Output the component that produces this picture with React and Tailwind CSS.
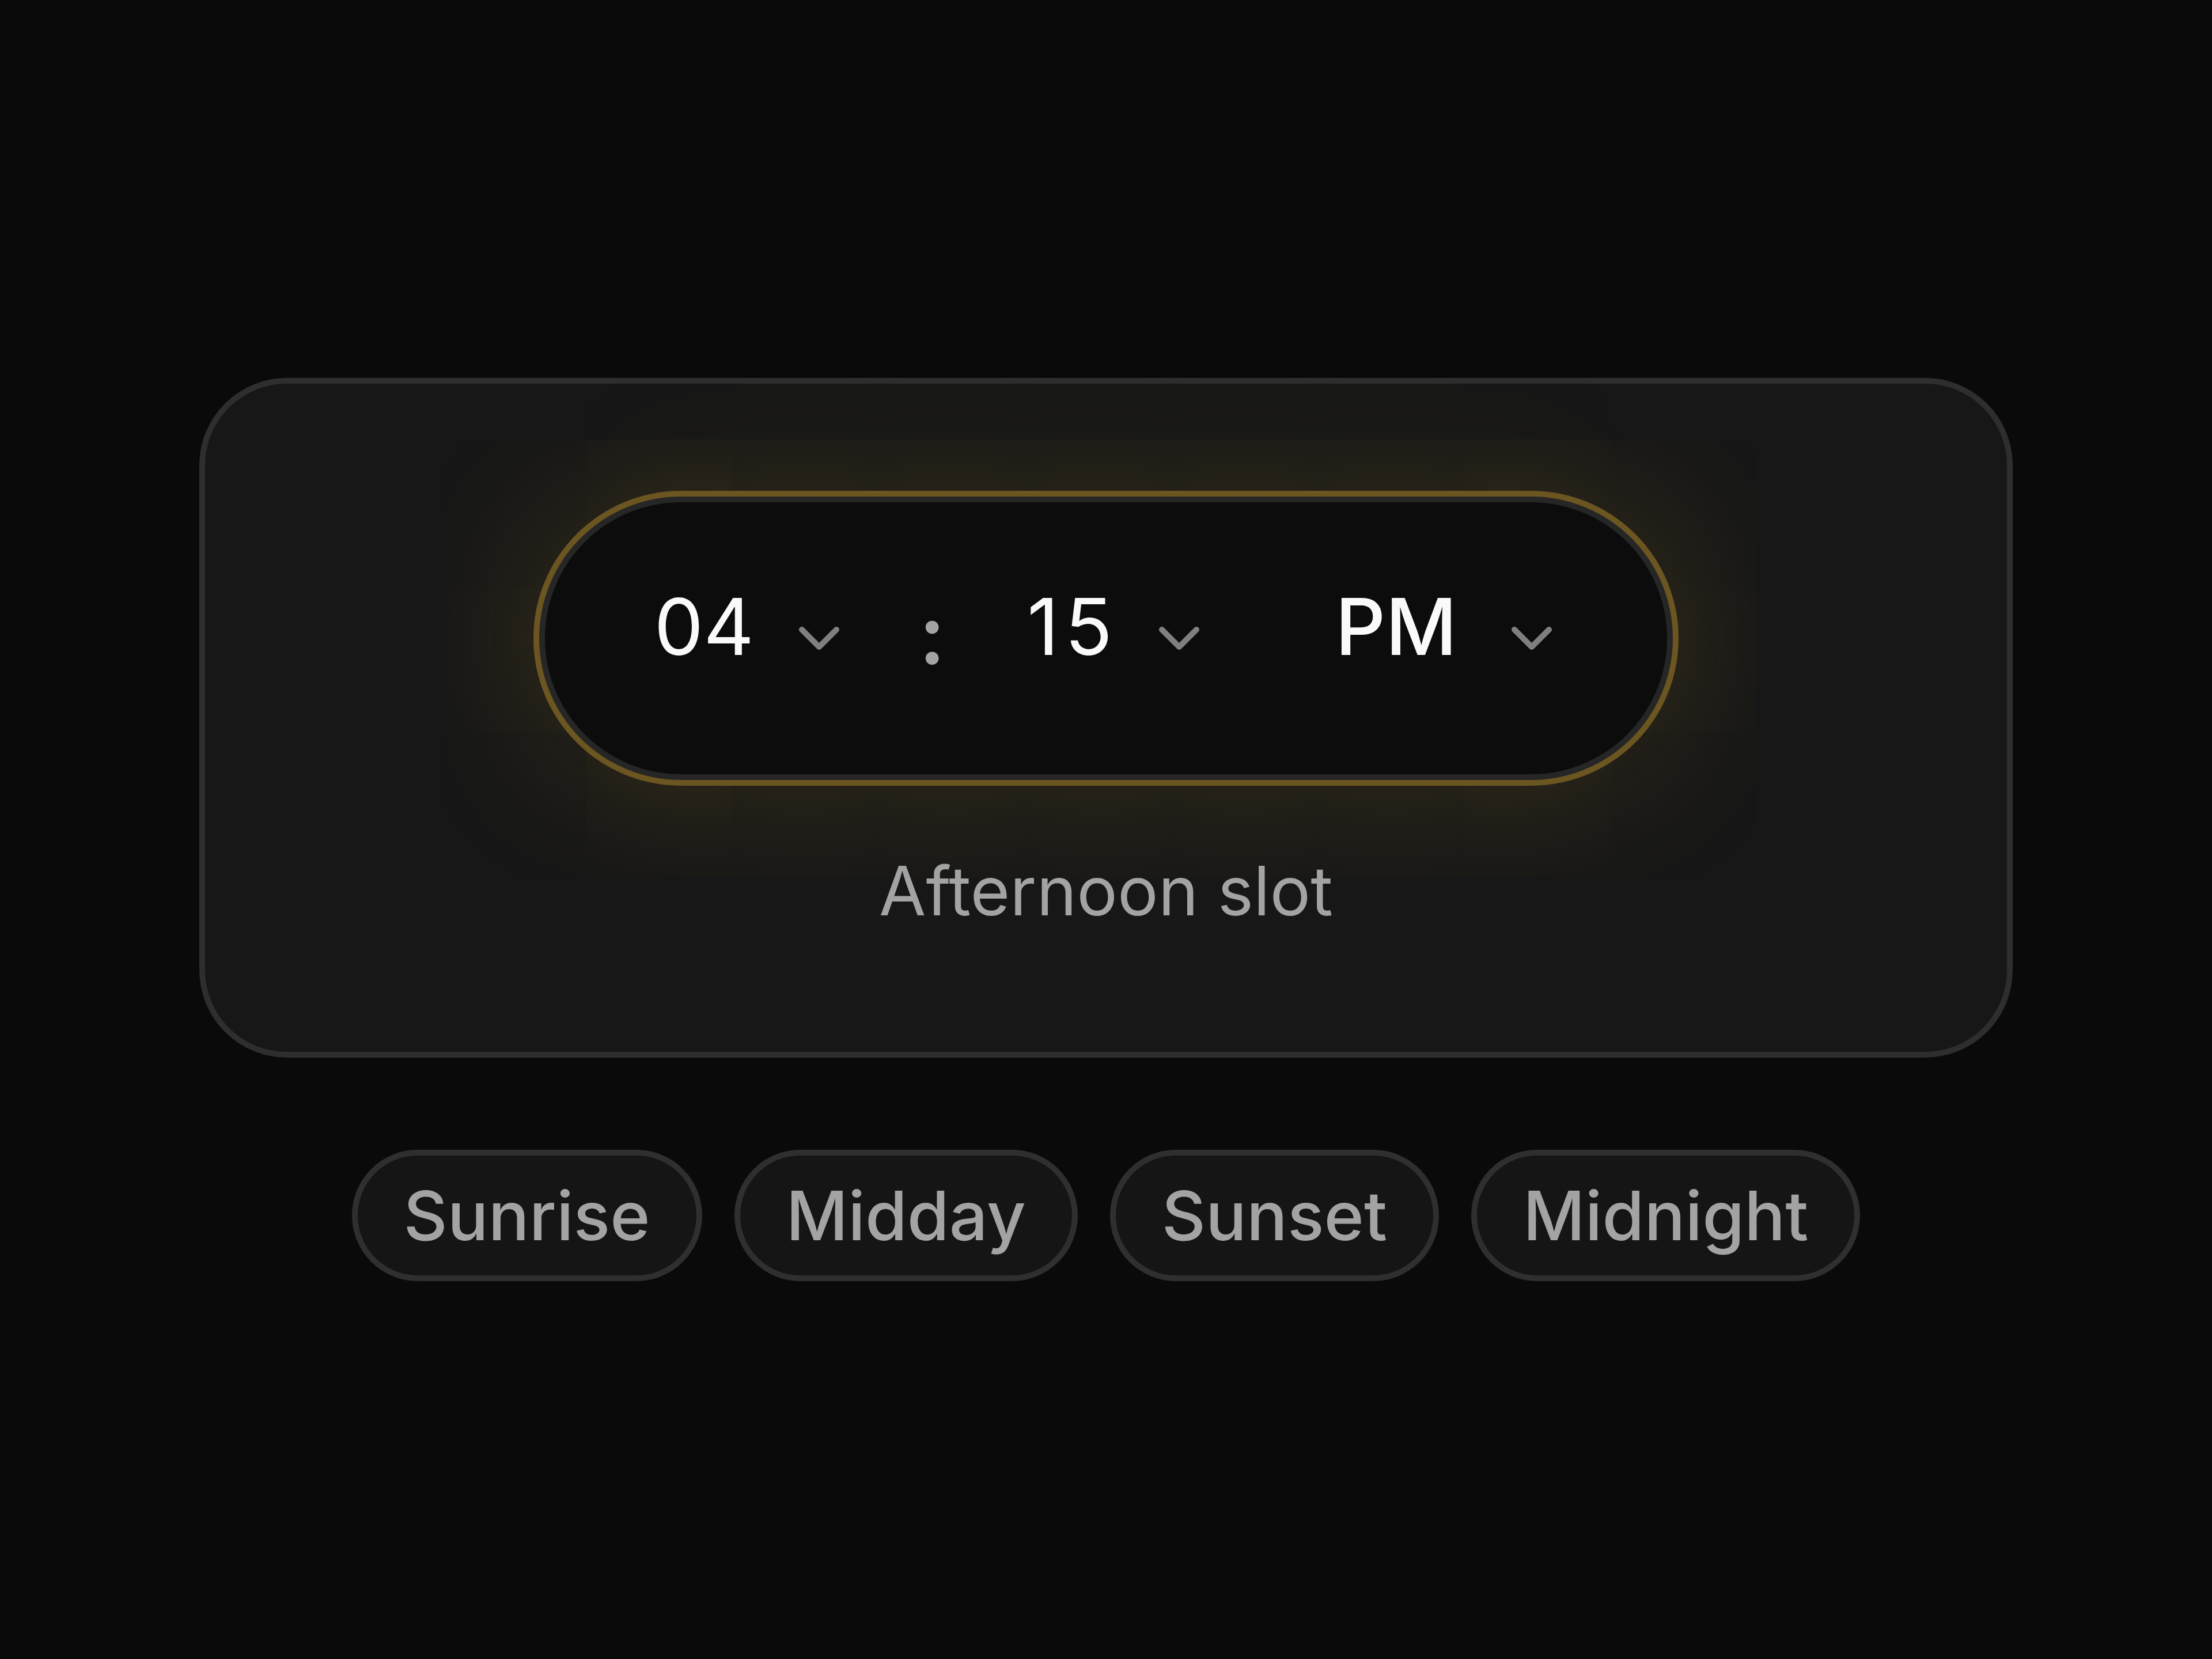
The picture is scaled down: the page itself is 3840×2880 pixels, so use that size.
import React, { useState } from 'react';
import { ChevronDown } from 'lucide-react';

const presets = ['Sunrise', 'Midday', 'Sunset', 'Midnight'];

const Segment = ({ value, className = '', textClass = '' }) => (
  <div className={`flex items-center ${className}`}>
    <span className={`pb-10 text-[136px] leading-none ${textClass}`}>{value}</span>
    <ChevronDown size={120} strokeWidth={2} className="text-[#7f7f7f]" />
  </div>
);

const App = () => {
  const [time] = useState({ hour: '04', minute: '15', period: 'PM' });

  return (
    <div className="min-h-screen bg-[#0a0a0a] flex flex-col items-center justify-center font-['Inter',sans-serif]">
      {/* Card */}
      <div className="w-[3148px] rounded-[152px] border-[10px] border-[#2e2e2e] bg-[#171717] flex flex-col items-center pt-49 pb-52">
        <div className="w-[1968px] h-[492px] rounded-full border-[10px] border-[#262626] bg-[#0c0c0c] shadow-[0_0_0_10px_#6b5520,0_0_280px_rgba(202,160,40,0.25)] flex items-center justify-center text-[#fafafa]">
          <Segment value={time.hour} className="ml-[15px] gap-[53px]" />
          <span className="ml-[113px] pb-3.5 text-[144px] leading-none font-semibold text-[#a3a3a3]">:</span>
          <Segment value={time.minute} className="ml-[142px] gap-[46px]" textClass="tracking-[10px]" />
          <Segment value={time.period} className="ml-[211px] gap-[70px] font-medium" />
        </div>
        <p className="mt-30 text-[118px] leading-[144px] text-[#a3a3a3]">Afternoon slot</p>
      </div>

      {/* Presets */}
      <div className="mt-40 flex gap-14">
        {presets.map((p) => (
          <button
            key={p}
            className="rounded-full border-[10px] border-[#2f2f2f] bg-[#151515] px-20 py-8 text-[118px] leading-[144px] font-medium text-[#a3a3a3]"
          >
            {p}
          </button>
        ))}
      </div>
    </div>
  );
};

export default App;
